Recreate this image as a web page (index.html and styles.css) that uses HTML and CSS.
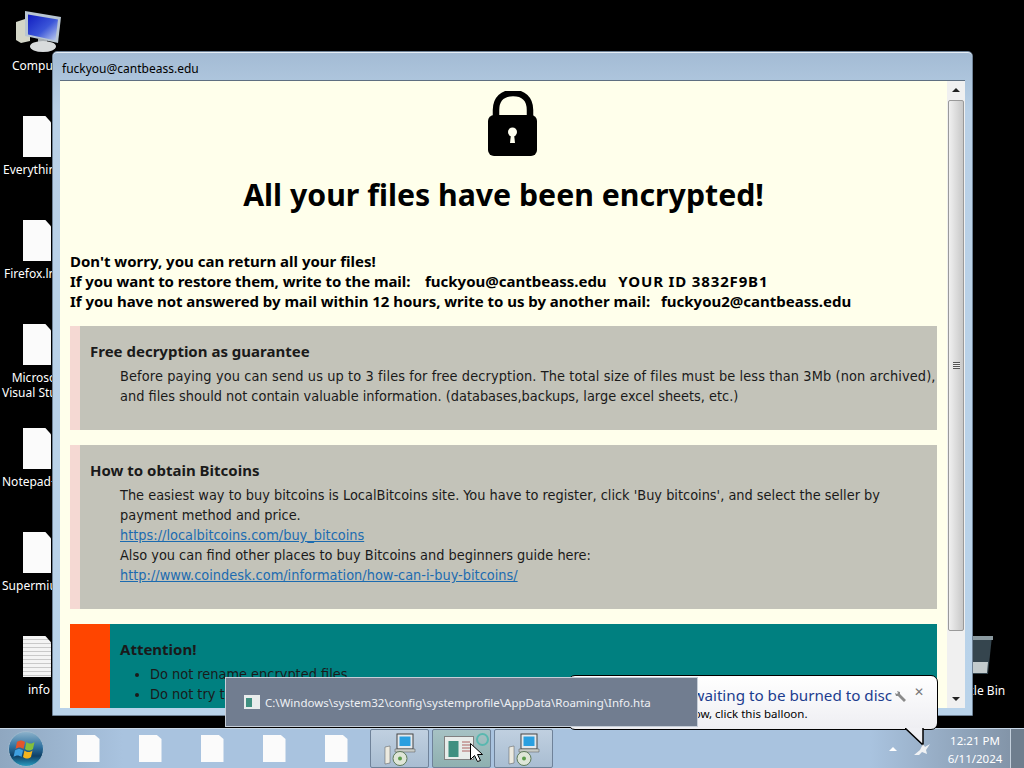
FILE: index.html
```html
<!DOCTYPE html>
<html lang="en">
<head>
<meta charset="utf-8">
<title>Info</title>
<link rel="stylesheet" href="styles.css">
</head>
<body>
<svg class="defs" width="0" height="0">
  <defs>
    <linearGradient id="orb" x1="0" y1="0" x2="0" y2="1">
      <stop offset="0" stop-color="#8fb4cc"/>
      <stop offset="0.45" stop-color="#2c6f9e"/>
      <stop offset="0.7" stop-color="#0f3f66"/>
      <stop offset="1" stop-color="#2aa0c4"/>
    </linearGradient>
    <linearGradient id="screen" x1="0" y1="0" x2="1" y2="1">
      <stop offset="0" stop-color="#101cc0"/>
      <stop offset="0.55" stop-color="#3a55d8"/>
      <stop offset="1" stop-color="#c4d2f0"/>
    </linearGradient>
  </defs>
</svg>
<main class="desktop">
  <div class="icon icon-computer">
    <svg class="glyph-computer" width="46" height="42" viewBox="0 0 46 42">
      <path d="M0 11l9-3 5 2v20l-9 2-5-3z" fill="#d4d6c8"/>
      <path d="M9 0l36 6-3 26-33-7z" fill="#b9c6d2"/>
      <path d="M12 3.500l30 5-2.500 21-27.500-6z" fill="url(#screen)"/>
      <path d="M22 27l9 2v4h-9z" fill="#a8aeb2"/>
      <ellipse cx="27" cy="35.500" rx="13" ry="5.500" fill="#d8dbdc"/>
    </svg>
    <span class="icon-label">Computer</span>
  </div>
  <div class="icon icon-r2"><div class="sheet"></div><span class="icon-label">Everything</span></div>
  <div class="icon icon-r3"><div class="sheet"></div><span class="icon-label">Firefox.lnk</span></div>
  <div class="icon icon-r4"><div class="sheet"></div><span class="icon-label label-center">Microsoft<br>Visual Studio</span></div>
  <div class="icon icon-r5"><div class="sheet"></div><span class="icon-label">Notepad++</span></div>
  <div class="icon icon-r6"><div class="sheet"></div><span class="icon-label">Supermium</span></div>
  <div class="icon icon-r7"><div class="sheet sheet-lined"></div><span class="icon-label">info</span></div>
  <div class="icon icon-bin">
    <svg width="34" height="46" viewBox="0 0 34 46">
      <path d="M2 4h28l-4 38H8z" fill="#35454e"/>
      <path d="M3 4h28v4H3z" fill="#8b9aa0"/>
      <path d="M10 30h16l-1 11H11z" fill="#c3cbcd"/>
    </svg>
    <span class="icon-label">Recycle Bin</span>
  </div>

  <section class="window">
    <header class="titlebar">fuckyou@cantbeass.edu</header>
    <div class="client">
      <div class="page">
        <svg class="lock" width="52" height="66" viewBox="0 0 52 66">
          <path d="M9 27V19C9 8 16 2 26 2s17 6 17 17v8" fill="none" stroke="#000" stroke-width="6.5"/>
          <rect x="1" y="24" width="49" height="41" rx="6" fill="#000"/>
          <circle cx="25.500" cy="41" r="4.500" fill="#fffff0"/>
          <path d="M24 43h3l1 9h-5z" fill="#fffff0"/>
        </svg>
        <h1 class="headline">All your files have been encrypted!</h1>
        <p class="intro">Don't worry, you can return all your files!<br><span class="tight">If you want to restore them, write to the mail:</span> &nbsp; <span class="mail">fuckyou@cantbeass.edu</span> &nbsp; <span class="wide">YOUR ID 3832F9B1</span><br><span class="tight-less">If you have not answered by mail within 12 hours, write to us by another mail:</span> &nbsp;<span class="mail">fuckyou2@cantbeass.edu</span></p>
        <div class="note">
          <div class="note-title">Free decryption as guarantee</div>
          <div class="note-body"><span class="stretch">Before paying you can send us up to 3 files for free decryption. The total size of files must be less than 3Mb (non archived),</span> and files should not contain valuable information. (databases,backups, large excel sheets, etc.)</div>
        </div>
        <div class="note">
          <div class="note-title">How to obtain Bitcoins</div>
          <div class="note-body">The easiest way to buy bitcoins is LocalBitcoins site. You have to register, click 'Buy bitcoins', and select the seller by payment method and price.<br><a href="#">https://localbitcoins.com/buy_bitcoins</a><br>Also you can find other places to buy Bitcoins and beginners guide here:<br><a href="#">http://www.coindesk.com/information/how-can-i-buy-bitcoins/</a></div>
        </div>
        <div class="note note-alert">
          <div class="note-title">Attention!</div>
          <ul class="rules">
            <li>Do not rename encrypted files.</li>
            <li>Do not try to decrypt your data using third party software.</li>
          </ul>
        </div>
      </div>
      <div class="scrollbar">
        <div class="arrow arrow-up"></div>
        <div class="thumb"><span class="grip"></span></div>
        <div class="arrow arrow-down"></div>
      </div>
    </div>
  </section>

  <aside class="balloon">
    <div class="balloon-title">Files are waiting to be burned to disc</div>
    <div class="balloon-text">To see the files now, click this balloon.</div>
    <span class="balloon-pin">
      <svg width="12" height="12" viewBox="0 0 12 12"><path d="M2 0l3 1v2l6 6-2 2-6-6H1L0 2l2 1 1-1z" fill="#8a8a8a"/></svg>
    </span>
    <span class="balloon-close">✕</span>
    <svg class="balloon-tail" width="20" height="20" viewBox="0 0 20 20">
      <path d="M0 0l18 17V0z" fill="#f0f0f4"/>
      <path d="M0 0l18 17V0" fill="none" stroke="#000" stroke-width="1.500"/>
    </svg>
  </aside>

  <div class="preview">
    <svg width="16" height="14" viewBox="0 0 16 14"><rect width="16" height="14" fill="#e8ecec"/><rect x="2" y="3" width="6" height="9" fill="#3f8f80"/></svg>
    <span>C:\Windows\system32\config\systemprofile\AppData\Roaming\Info.hta</span>
  </div>

  <footer class="taskbar">
    <div class="start">
      <svg width="36" height="36" viewBox="0 0 36 36">
        <circle cx="18" cy="18" r="17.500" fill="url(#orb)" stroke="#9fb8cc"/>
        <path d="M9 11c3-2 5-2 8 0l-1.500 7c-3-2-5-2-8 0z" fill="#e2552c"/>
        <path d="M18.500 11c3 2 5 2 8 0l-1.500 7c-3 2-5 2-8 0z" fill="#84bf3c"/>
        <path d="M7 19.500c3-2 5-2 8 0L13.500 26c-3-2-5-2-8 0z" fill="#3f9fe0"/>
        <path d="M16.500 19.500c3 2 5 2 8 0L23 26c-3 2-5 2-8 0z" fill="#f4b41e"/>
      </svg>
    </div>
    <div class="pins">
      <div class="pin"><div class="sheet sheet-small"></div></div>
      <div class="pin"><div class="sheet sheet-small"></div></div>
      <div class="pin"><div class="sheet sheet-small"></div></div>
      <div class="pin"><div class="sheet sheet-small"></div></div>
      <div class="pin"><div class="sheet sheet-small"></div></div>
    </div>
    <div class="tasks">
      <div class="task">
        <svg width="36" height="34" viewBox="0 0 36 34">
          <path d="M3 15l5-1v17l-5 1z" fill="#eceae0" stroke="#555" stroke-width="0.500"/>
          <rect x="15" y="2" width="16" height="15" fill="#e4e8ec" stroke="#444"/>
          <rect x="17.500" y="4.500" width="11" height="9.500" fill="#2a9fe0"/>
          <path d="M13 17h20v3H13z" fill="#c8ccc8" stroke="#555" stroke-width="0.500"/>
          <circle cx="18" cy="26.500" r="7" fill="#dfe6d8" stroke="#5e7a5a"/>
          <circle cx="18" cy="26.500" r="2" fill="#5c9c4a"/>
        </svg>
      </div>
      <div class="task task-active">
        <svg width="54" height="34" viewBox="0 0 54 34">
          <rect x="9.500" y="4.500" width="29" height="23" fill="#e8ecea" stroke="#808080"/>
          <rect x="13.500" y="9" width="10" height="16" fill="#3f8f80"/>
          <path d="M27 10h8M27 13h8M27 16h8M27 19h8" stroke="#a04040" stroke-width="0.800"/>
          <circle cx="47.500" cy="7.500" r="5.500" fill="none" stroke="#59b8b0" stroke-width="2"/>
          <path d="M35.500 11.500v16l4-4 3 6 3-1-3-6h5z" fill="#fff" stroke="#000"/>
        </svg>
      </div>
      <div class="task">
        <svg width="36" height="34" viewBox="0 0 36 34">
          <path d="M3 15l5-1v17l-5 1z" fill="#eceae0" stroke="#555" stroke-width="0.500"/>
          <rect x="15" y="2" width="16" height="15" fill="#e4e8ec" stroke="#444"/>
          <rect x="17.500" y="4.500" width="11" height="9.500" fill="#2a9fe0"/>
          <path d="M13 17h20v3H13z" fill="#c8ccc8" stroke="#555" stroke-width="0.500"/>
          <circle cx="18" cy="26.500" r="7" fill="#dfe6d8" stroke="#5e7a5a"/>
          <circle cx="18" cy="26.500" r="2" fill="#5c9c4a"/>
        </svg>
      </div>
    </div>
    <div class="tray">
      <span class="tray-arrow"></span>
      <svg class="tray-burn" width="18" height="16" viewBox="0 0 18 16"><path d="M1 14l6-5 3-6 2 3 5-3-4 6 1 4-5-2-3 3z" fill="#f0f2f4"/></svg>
      <div class="clock"><span>12:21 PM</span><span>6/11/2024</span></div>
      <div class="show-desktop"></div>
    </div>
  </footer>
</main>
</body>
</html>
```
FILE: styles.css
```css
* { box-sizing: border-box; }
html, body { margin: 0; height: 100%; }
body { background: #000; font-family: "Noto Sans", "DejaVu Sans", sans-serif; overflow: hidden; }
.defs { position: absolute; }
.desktop { position: relative; width: 1024px; height: 768px; overflow: hidden; background: #000; }

.icon { position: absolute; left: 0; width: 74px; display: flex; flex-direction: column; align-items: center; color: #fff; font-size: 12px; line-height: 15px; text-align: center; }
.icon-computer { top: 11px; }
.icon-r2 { top: 116px; }
.icon-r3 { top: 220px; }
.icon-r4 { top: 324px; }
.icon-r5 { top: 428px; }
.icon-r6 { top: 532px; }
.icon-r7 { top: 636px; }
.icon-bin { left: 936px; top: 632px; }
.icon-label { white-space: nowrap; margin-top: 5px; align-self: flex-start; }
.icon-computer .icon-label { margin: 5px 0 0 12px; }
.icon-r2 .icon-label { margin-left: 3px; }
.icon-r3 .icon-label { margin-left: 4px; }
.icon-r4 .icon-label { margin-left: 2px; margin-top: 5px; }
.icon-r5 .icon-label { margin-left: 2px; }
.icon-r6 .icon-label { margin-left: 2px; }
.icon-r7 .icon-label { margin-left: 28px; }
.icon-bin svg { margin-left: 12px; }
.icon-bin .icon-label { margin-left: 6px; }
.glyph-computer { align-self: flex-start; margin-left: 16px; }

.sheet { width: 28px; height: 41px; background: #fbfbfb; clip-path: polygon(0 0, 80% 0, 100% 15%, 100% 100%, 0 100%); }
.sheet-lined { background: repeating-linear-gradient(#f4f4f4 0 3px, #c9c9c9 3px 4px); }
.sheet-small { width: 23px; height: 27px; }

.window { position: absolute; left: 52px; top: 51px; width: 921px; height: 665px; padding: 0 7px 7px; display: flex; flex-direction: column; border: 1px solid #6f8296; border-radius: 5px 5px 0 0; background: linear-gradient(#a3bbd4, #b9d0e6 60px, #b9d3ea); box-shadow: inset 0 1px 0 #e6eef6; }
.titlebar { height: 28px; flex: none; padding: 9px 2px 0; font-size: 12px; line-height: 16px; color: #000; }
.client { flex: 1; min-height: 0; display: flex; background: #ffffeb; border-top: 1px solid #5f6f80; overflow: hidden; }

.page { flex: 1; min-width: 0; padding: 10px 10px 0; overflow: hidden; }
.lock { display: block; margin-left: 417px; }
.headline { margin: 16px 0 0; text-align: center; font-size: 30.25px; line-height: 44px; font-weight: 700; color: #000; }
.intro { margin: 34px 0 0; font-size: 15px; line-height: 20px; font-weight: 700; color: #000; }
.tight { letter-spacing: -0.08px; }
.tight-less { letter-spacing: -0.03px; }
.mail { margin-left: 3px; }
.wide { letter-spacing: 0.85px; }
.note { margin-top: 15px; height: 104px; padding: 15px 0 0 10px; border-left: 10px solid #f5d9d3; background: #c3c3b9; font-family: "DejaVu Sans", sans-serif; font-stretch: condensed; font-size: 14.4px; line-height: 20px; color: #1a1a1a; }
.note + .note { height: 164px; }
.note-title { font-family: "Noto Sans", sans-serif; font-stretch: normal; font-size: 15px; font-weight: 700; margin-bottom: 5px; }
.note-body { padding-left: 30px; }
.note-body a { color: #1c6bb0; }
.stretch { letter-spacing: 0.11px; }
.note + .note + .note { height: 120px; border-left: 40px solid #ff4500; background: #008080; padding-left: 10px; }
.rules { margin: 5px 0 0; padding-left: 30px; }

.scrollbar { flex: none; width: 18px; display: flex; flex-direction: column; background: #f0f0f0; position: relative; }
.arrow { flex: none; height: 18px; position: relative; }
.arrow::after { content: ""; position: absolute; left: 5px; top: 7px; border-left: 4px solid transparent; border-right: 4px solid transparent; }
.arrow-up::after { border-bottom: 4px solid #222; }
.arrow-down::after { border-top: 4px solid #222; }
.thumb { flex: 1; margin: 1px 1px 59px; display: flex; align-items: center; justify-content: center; border: 1px solid #9a9a9a; border-radius: 2px; background: linear-gradient(90deg, #f0f0f0, #dcdcdc 50%, #c8c8c8); }
.grip { width: 7px; height: 7px; background: repeating-linear-gradient(#555 0 1px, #eee 1px 2px); }

.balloon { position: absolute; z-index: 2; left: 568px; top: 675px; width: 370px; height: 55px; padding: 7px 0 0 12px; background: linear-gradient(#fff, #eeeef2); border: 1px solid #000; border-radius: 7px; overflow: visible; }
.balloon-title { font-size: 15.2px; line-height: 24px; color: #1d3d8f; white-space: nowrap; margin-left: 49px; }
.balloon-text { font-size: 11.500px; line-height: 14px; color: #000; white-space: nowrap; margin-left: 23px; }
.balloon-pin { position: absolute; left: 326px; top: 10px; }
.balloon-close { position: absolute; left: 345px; top: 8px; font-size: 12px; line-height: 16px; color: #777; }
.balloon-tail { position: absolute; left: 336px; top: 52px; }

.preview { position: absolute; z-index: 3; left: 225px; top: 677px; width: 473px; height: 50px; display: flex; align-items: center; gap: 5px; padding-left: 18px; background: #717d90; border: 1px solid #c6ced8; font-size: 11.500px; color: #eef0f4; white-space: nowrap; }

.taskbar { position: absolute; left: 0; right: 0; bottom: 0; height: 40px; display: flex; align-items: stretch; background: linear-gradient(90deg, #8fa7c0, #a9c3df 12%, #a9c3df 85%, #7f90a3); border-top: 1px solid #c8d8e8; }
.start { width: 52px; flex: none; display: flex; align-items: center; justify-content: center; }
.pins { display: flex; flex: none; padding-left: 5px; }
.pin { width: 62px; display: flex; align-items: center; justify-content: center; }
.tasks { display: flex; flex: none; gap: 3px; margin-left: 3px; }
.task { width: 59px; height: 39px; display: flex; align-items: center; justify-content: center; border: 1px solid #6f8299; border-radius: 2px; background: linear-gradient(#c0d0e0, #a9bdd2); }
.task-active { background: linear-gradient(#a6c2c4, #8fb0b0); }
.tray { flex: 1; display: flex; align-items: center; justify-content: flex-end; position: relative; z-index: 4; }
.tray-arrow { width: 0; height: 0; margin-right: 16px; border-left: 4px solid transparent; border-right: 4px solid transparent; border-bottom: 4px solid #fff; }
.tray-burn { margin-right: 17px; }
.clock { display: flex; flex-direction: column; align-items: center; width: 54px; font-size: 11.500px; line-height: 18px; color: #fff; margin-right: 8px; padding-top: 2px; }
.show-desktop { width: 14px; align-self: stretch; background: #6f7e8e; border-left: 1px solid #c4d0dc; }
```
